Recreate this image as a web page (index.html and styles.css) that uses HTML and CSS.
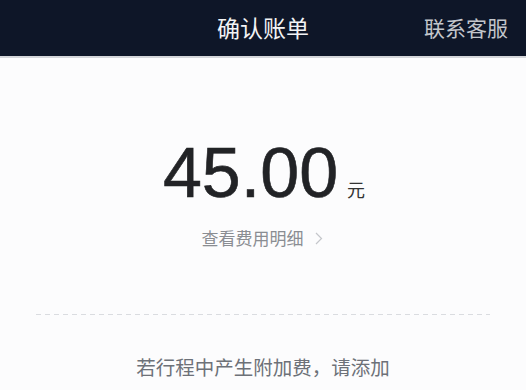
FILE: index.html
```html
<!DOCTYPE html>
<html lang="zh">
<head>
<meta charset="utf-8">
<link rel="stylesheet" href="styles.css">
</head>
<body>
<header class="bar">
  <div class="bar-side"></div>
  <h1 class="bar-title">确认账单</h1>
  <div class="bar-side bar-action">联系客服</div>
</header>
<main class="content">
  <div class="amount">
    <span class="amount-num">45.00</span>
    <span class="amount-unit">元</span>
  </div>
  <a class="detail-link">查看费用明细
    <svg class="chev" width="8" height="13" viewBox="0 0 8 13"><path d="M1 1 L6.5 6.5 L1 12" fill="none" stroke="#c4c6ca" stroke-width="1.2"/></svg>
  </a>
  <div class="divider"></div>
  <p class="note">若行程中产生附加费，请添加</p>
</main>
</body>
</html>
```
FILE: styles.css
```css
* { box-sizing: border-box; }
html, body { margin: 0; padding: 0; }
body {
  width: 526px;
  height: 390px;
  overflow: hidden;
  background: #fcfcfd;
  font-family: "Noto Sans CJK SC", "Noto Sans", sans-serif;
}
.bar {
  height: 58px;
  background: #0e1628;
  border-bottom: 2px solid #d4d6da;
  display: grid;
  grid-template-columns: 1fr auto 1fr;
  align-items: center;
}
.bar-title {
  margin: 0;
  font-size: 23px;
  font-weight: 400;
  color: #f2f3f5;
  line-height: 1;
  padding-bottom: 2px;
}
.bar-action {
  justify-self: end;
  padding-right: 18px;
  font-size: 21px;
  color: #c3c6cc;
  line-height: 1;
  padding-bottom: 2px;
}
.content {
  display: flex;
  flex-direction: column;
  align-items: center;
}
.amount {
  margin-top: 80px;
  display: flex;
  align-items: baseline;
  padding-left: 2px;
}
.amount-num {
  font-family: "Liberation Sans", Arial, sans-serif;
  font-size: 70px;
  line-height: 1;
  color: #222326;
  -webkit-text-stroke: 0.6px #222326;
}
.amount-unit {
  font-size: 18px;
  color: #333;
  margin-left: 9px;
}
.detail-link {
  margin-top: 21px;
  display: flex;
  align-items: center;
  gap: 11px;
  font-size: 17px;
  color: #8a8d92;
  line-height: 1;
  padding-right: 2px;
}
.chev { margin-top: 1px; }
.divider {
  margin-top: 68px;
  width: 454px;
  height: 1px;
  background: repeating-linear-gradient(90deg, #dadce0 0 5px, transparent 5px 9px);
}
.note {
  margin: 42px 0 0;
  font-size: 19.5px;
  color: #6d7178;
  line-height: 1;
}
```
